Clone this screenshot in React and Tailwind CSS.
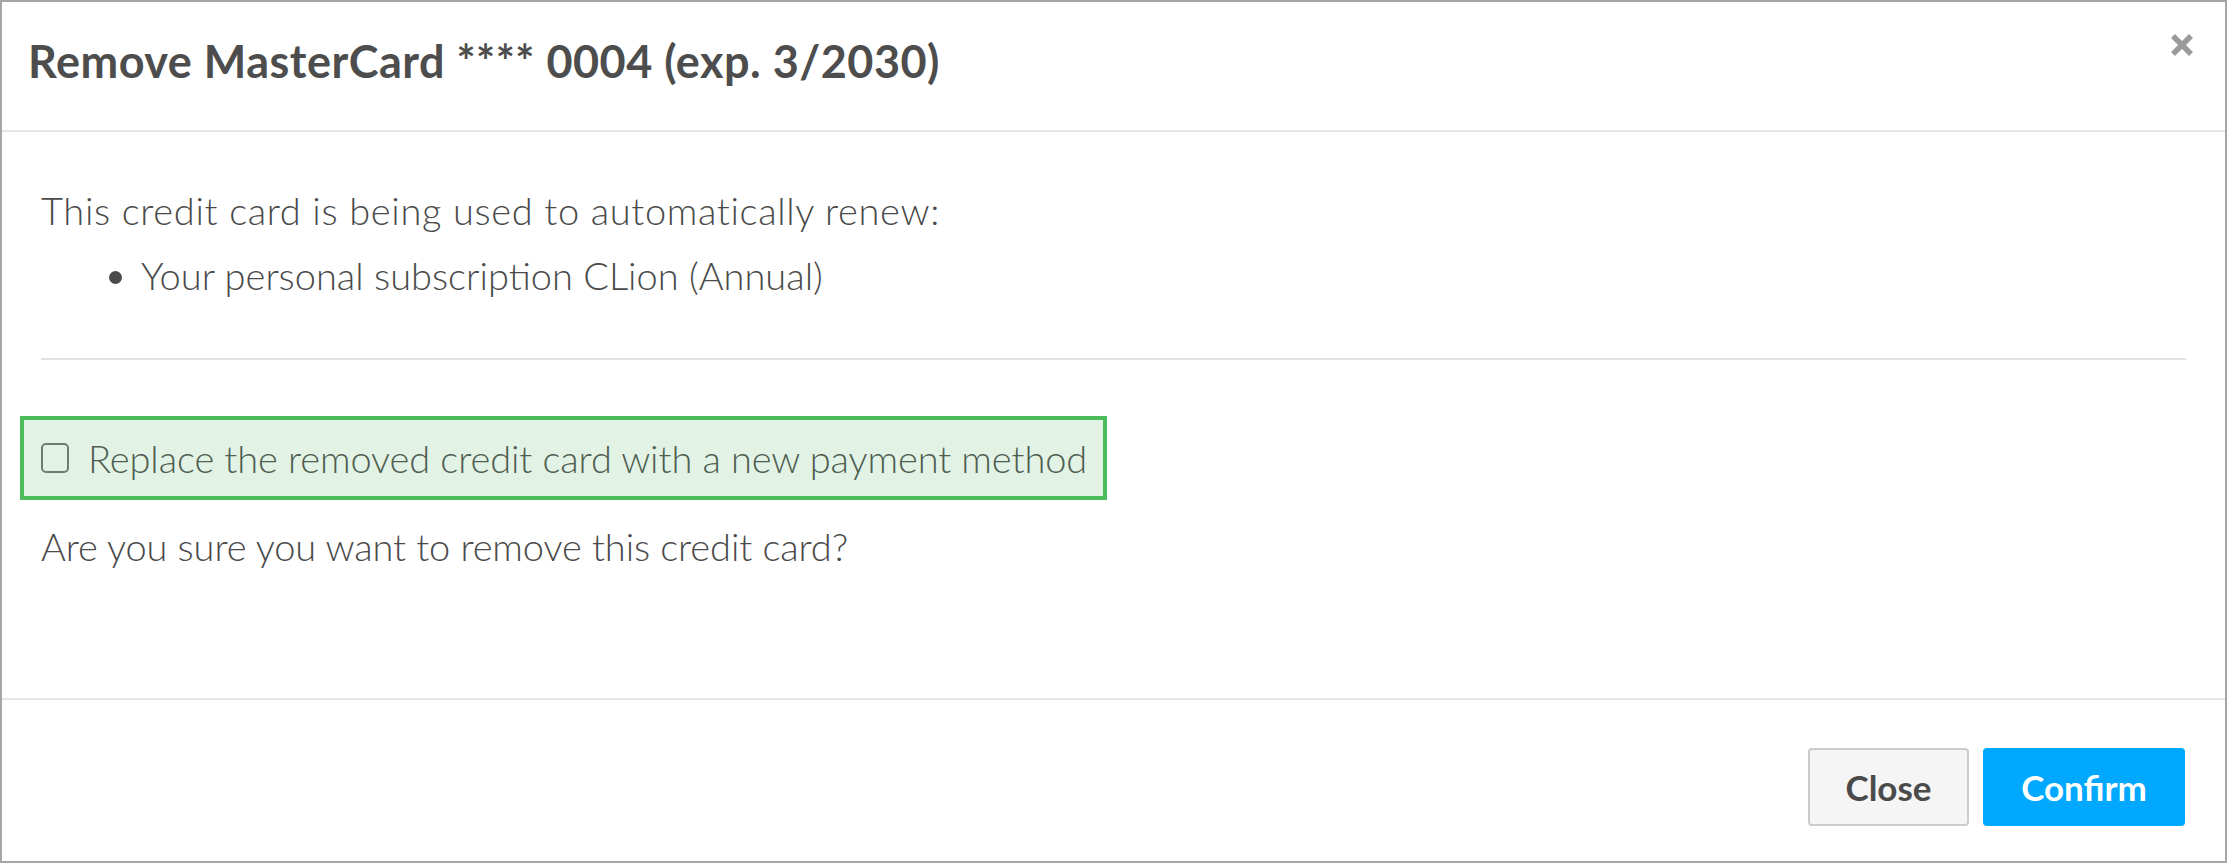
import React, { useState } from 'react';

const font = { fontFamily: 'Lato, "Open Sans", sans-serif' };

const App = () => {
    const [replace, setReplace] = useState(false);

    return (
        <div style={font} className="w-full h-[863px] bg-white border-2 border-[#a6a6a6] flex flex-col text-[#4a4a4a]">
            <header className="h-[130px] flex-shrink-0 flex items-center justify-between pl-[26px] pr-[31px] border-b-2 border-[#e6e6e6]">
                <h1 className="text-[45px] font-bold tracking-[0.5px] text-[#4d4d4d] pb-[8px]">Remove MasterCard **** 0004 (exp. 3/2030)</h1>
                <button className="text-[#9a9a9a] self-start mt-[31px]">
                    <svg width="24" height="24" viewBox="0 0 24 24">
                        <path d="M3 3 L21 21 M21 3 L3 21" stroke="currentColor" strokeWidth="5.5" />
                    </svg>
                </button>
            </header>

            <main className="flex-1 px-[39px] pt-[52px] text-[38px] font-light">
                <p className="leading-[52px] tracking-[0.65px]">This credit card is being used to automatically renew:</p>
                <ul className="list-disc pl-[100px] mt-[13px] leading-[52px]">
                    <li>Your personal subscription CLion (Annual)</li>
                </ul>
                <div className="h-[2px] bg-[#e2e2e2] mt-[57px]" />

                <label className="mt-[56px] -ml-[21px] w-fit flex items-center gap-[19px] border-[4px] border-[#4cbb5c] bg-[#e2f3e6] pl-[17px] pr-[16px] h-[84px] text-[#4f5e51] cursor-pointer">
                    <span className="w-[28px] h-[30px] rounded-[5px] border-2 border-[#6b7f6d] flex-shrink-0" onClick={() => setReplace(!replace)} />
                    <span className="leading-[52px] tracking-[-0.1px]">Replace the removed credit card with a new payment method</span>
                </label>

                <p className="mt-[20px] leading-[52px] tracking-[-0.1px]">Are you sure you want to remove this credit card?</p>
            </main>

            <footer className="h-[163px] flex-shrink-0 border-t-2 border-[#e6e6e6] flex items-start justify-end gap-[14px] pt-[48px] pr-[40px]">
                <button className="w-[161px] h-[78px] rounded-[4px] border-2 border-[#cbcbcb] bg-[#f5f5f5] text-[35px] font-bold text-[#4a4a4a]">Close</button>
                <button className="w-[202px] h-[78px] rounded-[4px] bg-[#00a8ff] text-[35px] font-bold text-white">Confirm</button>
            </footer>
        </div>
    );
};

export default App;
